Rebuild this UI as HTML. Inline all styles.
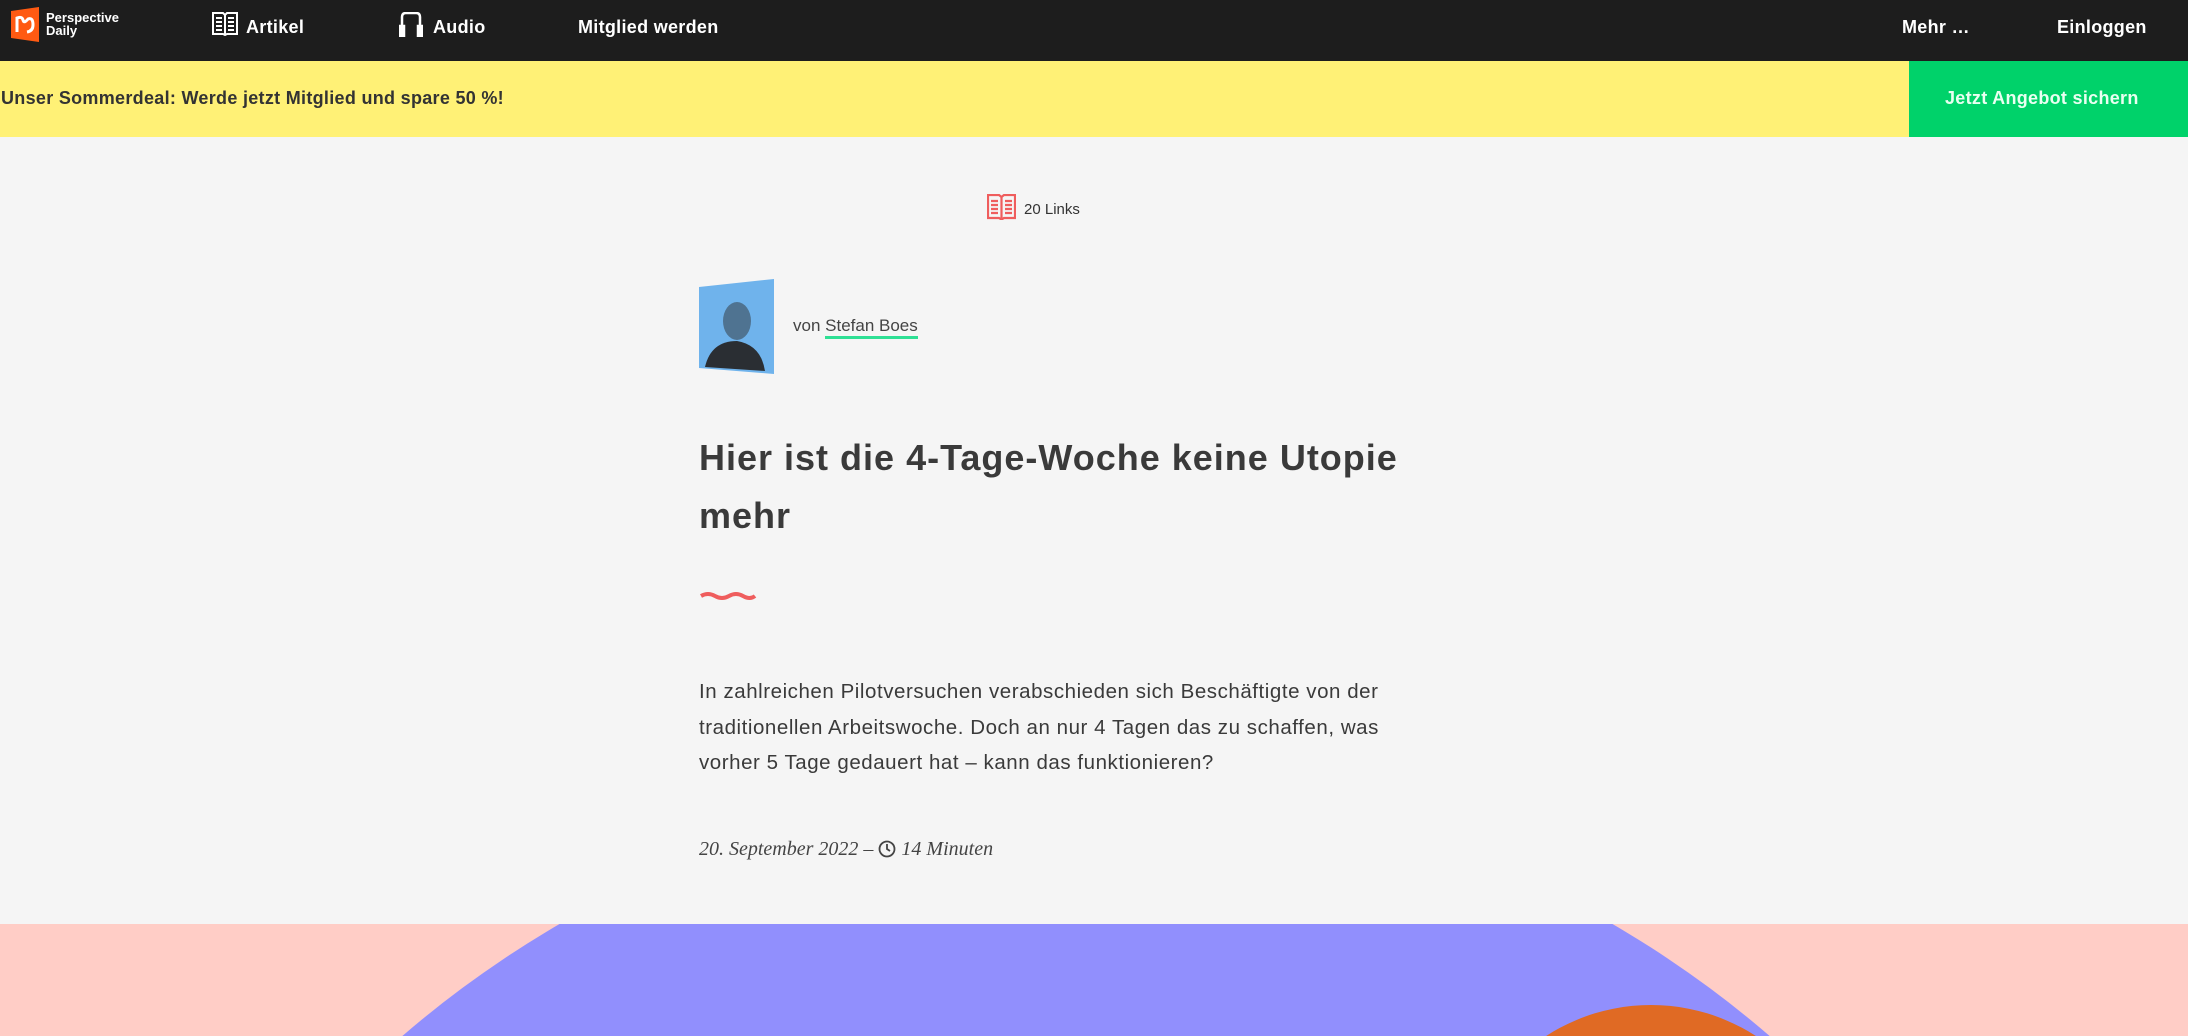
<!DOCTYPE html>
<html><head><meta charset="utf-8"><style>
*{margin:0;padding:0;box-sizing:border-box}
html,body{width:2188px;height:1036px;overflow:hidden}
body{background:#f5f5f5;font-family:"Liberation Sans",sans-serif;color:#3a3a3a;position:relative}
.nav{position:absolute;left:0;top:0;width:2188px;height:61px;background:#1d1d1d;color:#fff}
.nav .t{position:absolute;top:17px;font-size:18px;font-weight:bold;letter-spacing:0.3px}
.promo{position:absolute;left:0;top:61px;width:2188px;height:76px;background:#fff176}
.promo .txt{position:absolute;left:1px;top:27px;font-size:18px;font-weight:bold;color:#333;letter-spacing:0.3px}
.btn{position:absolute;left:1909px;top:0;width:279px;height:76px;background:#00d26a;color:#e9fff1;font-size:18px;font-weight:bold;padding:27px 0 0 36px;letter-spacing:0.3px}
.abs{position:absolute}
.bottom{position:absolute;left:0;top:924px;width:2188px;height:112px;background:#ffcdc6;overflow:hidden}
</style></head><body>
<div class="nav">
  <svg class="abs" style="left:11px;top:7px" width="28" height="35" viewBox="0 0 28 35"><polygon points="0,4 28,0 28,35 0,31" fill="#ff5a12"/><path d="M6 25 V11 Q11 9 12 13 Q13 17 17 12 Q22 10 22 18 Q22 24 16 25" stroke="#fff" stroke-width="3" fill="none"/></svg>
  <div class="abs" style="left:46px;top:11px;font-size:13px;font-weight:bold;line-height:13px;color:#fff">Perspective<br>Daily</div>
  <svg class="abs" style="left:212px;top:12px" width="26" height="24" viewBox="0 0 26 24" fill="none" stroke="#fff" stroke-width="2"><path d="M1 1h10l2 2 2-2h10v21H15l-2 1-2-1H1z"/><path d="M13 3v19M4 6h6M4 10h6M4 14h6M4 18h6M16 6h6M16 10h6M16 14h6M16 18h6"/></svg>
  <div class="t" style="left:246px">Artikel</div>
  <svg class="abs" style="left:399px;top:12px" width="24" height="25" viewBox="0 0 24 25" fill="none" stroke="#fff" stroke-width="2.5"><path d="M3 23V5Q3 1 7 1h10q4 0 4 4v18"/><path d="M1 14h4v10H1zM19 14h4v10h-4z" fill="#fff"/></svg>
  <div class="t" style="left:433px">Audio</div>
  <div class="t" style="left:578px">Mitglied werden</div>
  <div class="t" style="left:1902px">Mehr …</div>
  <div class="t" style="left:2057px">Einloggen</div>
</div>
<div class="promo"><div class="txt">Unser Sommerdeal: Werde jetzt Mitglied und spare 50 %!</div><div class="btn">Jetzt Angebot sichern</div></div>

<svg class="abs" style="left:987px;top:194px" width="29" height="26" viewBox="0 0 29 26" fill="none" stroke="#ef5d5d" stroke-width="2.2"><path d="M1 1h11l2.5 2 2.5-2h11v23H17l-2.5 1.5L12 24H1z"/><path d="M14.5 3v21M4 7h7M4 11h7M4 15h7M4 19h7M18 7h7M18 11h7M18 15h7M18 19h7"/></svg>
<div class="abs" style="left:1024px;top:201px;font-size:15px;color:#333">20 Links</div>

<svg class="abs" style="left:699px;top:279px" width="76" height="95" viewBox="0 0 76 95"><polygon points="0,8 75,0 75,95 0,89" fill="#6fb3ec"/><ellipse cx="38" cy="42" rx="14" ry="19" fill="#4f7391"/><path d="M6 88 Q12 62 38 62 Q62 66 66 92 Z" fill="#2a2e33"/></svg>
<div class="abs" style="left:793px;top:316px;font-size:17px;color:#444">von <span style="border-bottom:3px solid #2fe095;padding-bottom:1px">Stefan Boes</span></div>

<div class="abs" style="left:699px;top:429px;width:760px;font-size:36px;line-height:58px;font-weight:bold;color:#3a3a3a;letter-spacing:1px">Hier ist die 4-Tage-Woche keine Utopie<br>mehr</div>

<svg class="abs" style="left:699px;top:590px" width="58" height="12" viewBox="0 0 58 12"><path d="M2 6 Q9 2 16 6 T30 6 T44 6 T56 6" stroke="#ef5d5d" stroke-width="4" fill="none"/></svg>

<div class="abs" style="left:699px;top:674px;width:760px;font-size:20.5px;line-height:35.5px;color:#3a3a3a;letter-spacing:0.55px">In zahlreichen Pilotversuchen verabschieden sich Beschäftigte von der<br>traditionellen Arbeitswoche. Doch an nur 4 Tagen das zu schaffen, was<br>vorher 5 Tage gedauert hat – kann das funktionieren?</div>

<div class="abs" style="left:699px;top:838px;font-family:'Liberation Serif',serif;font-style:italic;font-size:20px;color:#444">20. September 2022 – <svg width="18" height="18" viewBox="0 0 18 18" style="vertical-align:-3px" fill="none" stroke="#444" stroke-width="1.8"><circle cx="9" cy="9" r="7.5"/><path d="M9 4v5l3 2"/></svg> 14 Minuten</div>

<div class="bottom">
  <div class="abs" style="left:39px;top:-142px;width:2094px;height:2094px;border-radius:50%;background:#918ffd"></div>
  <div class="abs" style="left:1458px;top:81px;width:386px;height:386px;border-radius:50%;background:#e06a24"></div>
</div>
</body></html>
